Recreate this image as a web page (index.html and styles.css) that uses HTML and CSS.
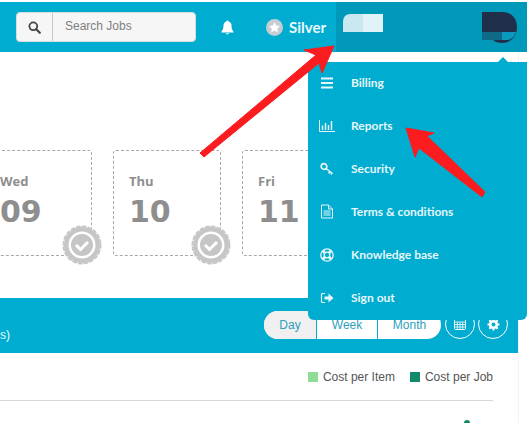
FILE: index.html
```html
<!DOCTYPE html>
<html lang="en">
<head>
    <meta charset="UTF-8">
    <title>Schedule</title>
    <link rel="stylesheet" href="styles.css">
</head>
<body>
    <div id="wrap">
        <div class="header">
            <div class="header-left">
                <div class="search">
                    <span class="search-btn">
                        <svg width="13" height="13" viewBox="0 0 13 13"><circle cx="5.3" cy="5.3" r="3.9" fill="none" stroke="#444" stroke-width="1.8"/><path d="M8.2 8.2l3.6 3.6" stroke="#444" stroke-width="2.2" stroke-linecap="round"/></svg>
                    </span>
                    <span class="search-text">Search Jobs</span>
                </div>
                <svg class="bell" width="13" height="15" viewBox="0 0 13 15"><path d="M6.5 0.5c.6 0 1 .4 1 1 2 .4 3 2 3 4 0 3 .6 4.500 2 6v1H.5v-1c1.400-1.500 2-3 2-6 0-2 1-3.600 3-4 0-.6.4-1 1-1z" fill="#fff"/><path d="M4.800 13.300a1.800 1.700 0 0 0 3.400 0z" fill="#fff"/></svg>
                <div class="level">
                    <svg width="17" height="17" viewBox="0 0 17 17"><circle cx="8.500" cy="8.500" r="8.500" fill="#c4ced2"/><path d="M8.500 3l1.700 3.600 3.800.5-2.800 2.600.7 3.800-3.400-1.900-3.400 1.900.7-3.800L3 7.100l3.800-.5z" fill="#fff"/></svg>
                    <span>Silver</span>
                </div>
            </div>
            <div class="header-right">
                <div class="logo-mask">
                    <span class="mask-a"></span>
                    <span class="mask-b"></span>
                </div>
                <svg class="avatar" width="36" height="32" viewBox="0 0 36 32"><path d="M0 0h20c9 0 15 6 15 15 0 10-7 16-15 16-4 0-7-1-9-3H0z" fill="#20304a"/><path d="M0 20h20v8H0z" fill="#0e6a86"/><path d="M20 20h14c-1 4-4 7-8 8h-6z" fill="#0a9ac0"/></svg>
            </div>
        </div>

        <div class="days">
            <div class="day">
                <div class="day-name">Wed</div>
                <div class="day-num">09</div>
                <svg class="seal" width="40" height="40" viewBox="0 0 40 40"><use href="#seal"/></svg>
            </div>
            <div class="day">
                <div class="day-name">Thu</div>
                <div class="day-num">10</div>
                <svg class="seal" width="40" height="40" viewBox="0 0 40 40"><use href="#seal"/></svg>
            </div>
            <div class="day">
                <div class="day-name">Fri</div>
                <div class="day-num">11</div>
            </div>
        </div>

        <div class="band">
            <span class="band-title">s)</span>
            <div class="band-tools">
                <div class="tabs">
                    <span class="tab tab-on">Day</span>
                    <span class="tab tab-mid">Week</span>
                    <span class="tab tab-end">Month</span>
                </div>
                <span class="round-btn">
                    <svg width="12" height="12" viewBox="0 0 12 12"><rect x=".5" y="1.500" width="11" height="10" rx="1" fill="none" stroke="#fff"/><path d="M.5 4h11M3.300 4v7.500M6 4v7.500M8.700 4v7.500M.5 6.500h11M.5 9h11" stroke="#fff" stroke-width=".8"/></svg>
                </span>
                <span class="round-btn">
                    <svg width="13" height="13" viewBox="0 0 13 13"><circle cx="6.500" cy="6.500" r="3.300" fill="none" stroke="#fff" stroke-width="2.600"/><path d="M6.500.5v2M6.500 10.500v2M.5 6.500h2M10.500 6.500h2M2.300 2.300l1.400 1.400M9.300 9.300l1.400 1.400M2.300 10.700l1.400-1.400M9.300 3.700l1.400-1.400" stroke="#fff" stroke-width="2"/></svg>
                </span>
            </div>
        </div>

        <div class="legend-wrap">
            <div class="legend">
                <span class="key"><i class="swatch swatch-item"></i>Cost per Item</span>
                <span class="key"><i class="swatch swatch-job"></i>Cost per Job</span>
            </div>
        </div>
    </div>

    <i class="chart-dot"></i>

    <div class="menu">
        <a class="menu-item">
            <span class="ico"><svg width="14" height="14" viewBox="0 0 14 14"><path d="M1 2.500h12M1 7h12M1 11.500h12" stroke="#e6f7fb" stroke-width="1.800"/></svg></span>
            <span>Billing</span>
        </a>
        <a class="menu-item">
            <span class="ico"><svg width="16" height="14" viewBox="0 0 16 14"><path d="M.5 1v11.500H16" fill="none" stroke="#e6f7fb"/><path d="M3.500 6.500v4.500M6.500 4v7M9.500 6v5M12.500 2v9" stroke="#e6f7fb" stroke-width="1.500"/></svg></span>
            <span>Reports</span>
        </a>
        <a class="menu-item">
            <span class="ico"><svg width="14" height="14" viewBox="0 0 14 14"><circle cx="4" cy="4.500" r="2.800" fill="none" stroke="#e6f7fb" stroke-width="1.700"/><path d="M6 6.500l6.500 5M10 9.500l-1.500 2M12 11l-1 1.500" fill="none" stroke="#e6f7fb" stroke-width="1.500"/></svg></span>
            <span>Security</span>
        </a>
        <a class="menu-item">
            <span class="ico"><svg width="14" height="15" viewBox="0 0 14 15"><path d="M1.500 1h7l4 4v9h-11zM8.500 1v4h4" fill="none" stroke="#e6f7fb"/><path d="M3.500 7h7M3.500 9h7M3.500 11h7" stroke="#e6f7fb"/></svg></span>
            <span>Terms &amp; conditions</span>
        </a>
        <a class="menu-item">
            <span class="ico"><svg width="14" height="14" viewBox="0 0 14 14"><circle cx="7" cy="7" r="6.200" fill="none" stroke="#e6f7fb" stroke-width="1.300"/><circle cx="7" cy="7" r="2.800" fill="none" stroke="#e6f7fb" stroke-width="1.300"/><path d="M2.800 2.800l2.200 2.200M11.200 2.800L9 5M2.800 11.200L5 9M11.200 11.200L9 9" stroke="#e6f7fb" stroke-width="2.800"/></svg></span>
            <span>Knowledge base</span>
        </a>
        <a class="menu-item">
            <span class="ico"><svg width="14" height="14" viewBox="0 0 14 14"><path d="M5 2.500H2.500a1 1 0 0 0-1 1v7a1 1 0 0 0 1 1H5" fill="none" stroke="#e6f7fb" stroke-width="1.200"/><path d="M4.500 5.500h4V2.500L13.500 7l-5 4.500v-3h-4z" fill="#e6f7fb"/></svg></span>
            <span>Sign out</span>
        </a>
    </div>

    <svg class="arrows" width="527" height="423" viewBox="0 0 527 423">
        <path d="M200 153L316 55 304 50 334 46 322 73 319 63 204 157z" fill="#fb1c1f" stroke="#fb1c1f" stroke-linejoin="round"/>
        <path d="M406 128L434 133 427 136 485 192 482 197 419 148 415 157z" fill="#fb1c1f" stroke="#fb1c1f" stroke-linejoin="round"/>
    </svg>

    <svg width="0" height="0" class="defs">
        <defs>
            <g id="seal">
                <circle cx="20" cy="20" r="18" fill="#c6c6c6"/>
                <circle cx="20" cy="20" r="18.600" fill="none" stroke="#c6c6c6" stroke-width="1.800" stroke-dasharray="3.200 2.640" stroke-linecap="round"/>
                <circle cx="20" cy="20" r="13.500" fill="#fff"/>
                <circle cx="20" cy="20" r="11" fill="#c6c6c6"/>
                <path d="M14 20l4.500 4.500 7.500-7.500" fill="none" stroke="#fff" stroke-width="3"/>
            </g>
        </defs>
    </svg>
</body>
</html>
```

FILE: styles.css
```css
html,body{
    margin: 0;
    width: 527px;
    height: 423px;
    overflow: hidden;
    background: #fff;
    font-family: "Liberation Sans", Arial, sans-serif;
}
#wrap{
    width: 519px;
    height: 423px;
    padding-top: 2px;
    box-sizing: border-box;
    border-right: 1px solid #f3f3f3;
}

/* top bar */
.header{
    display: flex;
    height: 50px;
    background-color: #00acd0;
}
.header-left{
    display: flex;
    align-items: center;
    width: 336px;
    padding-left: 16px;
    box-sizing: border-box;
}
.header-right{
    position: relative;
    display: flex;
    flex: 1;
    width: 191px;
    margin-right: -9px;
    padding: 10px 9px 0 7px;
    justify-content: space-between;
    box-sizing: border-box;
    background-color: #0099ba;
}
.search{
    display: flex;
    width: 180px;
    height: 30px;
    background-color: #f6f6f6;
    border: 1px solid #d5dfe2;
    border-radius: 4px;
    box-sizing: border-box;
}
.search-btn{
    display: flex;
    align-items: center;
    justify-content: center;
    width: 35px;
    border-right: 1px solid #c9c9c9;
}
.search-text{
    padding-left: 12px;
    font-size: 12px;
    line-height: 27px;
    color: #808080;
}
.bell{
    margin-left: 25px;
}
.level{
    display: flex;
    align-items: center;
    gap: 6px;
    margin-left: 32px;
    font-family: "Lato", sans-serif;
    font-weight: 700;
    font-size: 15px;
    color: #eafafd;
}
.logo-mask{
    display: flex;
    height: 18px;
    margin-top: 2px;
}
.mask-a{
    width: 20px;
    background-color: #c9e8f0;
    border-radius: 7px 0 0 0;
}
.mask-b{
    width: 20px;
    background-color: #dff3f8;
}

/* day cards */
.days{
    display: flex;
    gap: 21px;
    margin-left: -16px;
    padding-top: 98px;
    height: 246px;
    box-sizing: border-box;
}
.day{
    position: relative;
    flex: none;
    width: 108px;
    height: 106px;
    padding: 22px 0 0 15px;
    box-sizing: border-box;
    border: 1px dashed #a8a8a8;
    border-radius: 3px;
    color: #8e8e8e;
    font-family: "Open Sans", sans-serif;
}
.day-name{
    font-size: 13px;
    font-weight: 700;
    line-height: 16px;
}
.day-num{
    padding-top: 3px;
    font-family: "DejaVu Sans", sans-serif;
    font-size: 30px;
    font-weight: 700;
    line-height: 40px;
}
.seal{
    position: absolute;
    right: -11px;
    bottom: -10px;
}

/* blue band */
.band{
    display: flex;
    align-items: flex-end;
    justify-content: space-between;
    height: 55px;
    padding-bottom: 14px;
    box-sizing: border-box;
    background-color: #00acd0;
    color: #eafafd;
    font-size: 12px;
}
.band-title{
    margin-bottom: -4px;
    line-height: 16px;
}
.band-tools{
    display: flex;
    align-items: flex-end;
    gap: 3px;
    margin-right: 10px;
}
.tabs{
    display: flex;
    height: 28px;
    background-color: #fff;
    border-radius: 14px;
    overflow: hidden;
    margin-right: 1px;
}
.tab{
    box-sizing: border-box;
    font-size: 12px;
    line-height: 28px;
    text-align: center;
    color: #2d9fc0;
    border-left: 1px solid #00acd0;
}
.tab-on{
    width: 52px;
    border-left: none;
    background-color: #f0f0f0;
}
.tab-mid{
    width: 61px;
}
.tab-end{
    width: 64px;
}
.round-btn{
    display: flex;
    align-items: center;
    justify-content: center;
    width: 28px;
    height: 28px;
    border: 1px solid #fff;
    border-radius: 50%;
}

/* legend */
.legend-wrap{
    height: 47px;
    margin-right: 25px;
    border-bottom: 1px solid #d6d6d6;
}
.legend{
    display: flex;
    justify-content: flex-end;
    gap: 15px;
    padding-top: 16px;
    font-size: 12px;
    line-height: 16px;
    color: #555;
}
.key{
    display: flex;
    align-items: center;
    gap: 5px;
}
.swatch{
    width: 10px;
    height: 10px;
}
.swatch-item{
    background-color: #8fdc97;
}
.swatch-job{
    background-color: #13896c;
}
.chart-dot{
    position: absolute;
    left: 464px;
    top: 420px;
    width: 6px;
    height: 6px;
    border-radius: 50%;
    background-color: #13896c;
}

/* dropdown */
.menu{
    position: absolute;
    left: 308px;
    top: 62px;
    width: 219px;
    height: 258px;
    background-color: #00acd0;
    border-radius: 0 0 6px 6px;
    font-family: "Lato", sans-serif;
    font-weight: 700;
    font-size: 12px;
    color: #e6f7fb;
}
.menu:before{
    content: "";
    position: absolute;
    left: 190px;
    top: -5px;
    border-left: 5px solid transparent;
    border-right: 5px solid transparent;
    border-bottom: 5px solid #00acd0;
}
.menu-item{
    display: flex;
    align-items: center;
    height: 43px;
    padding: 0 0 2px 10px;
    box-sizing: border-box;
}
.ico{
    display: flex;
    flex: none;
    width: 18px;
    margin-right: 15px;
    justify-content: center;
}

.arrows{
    position: absolute;
    left: 0;
    top: 0;
}
.defs{
    position: absolute;
}
```
